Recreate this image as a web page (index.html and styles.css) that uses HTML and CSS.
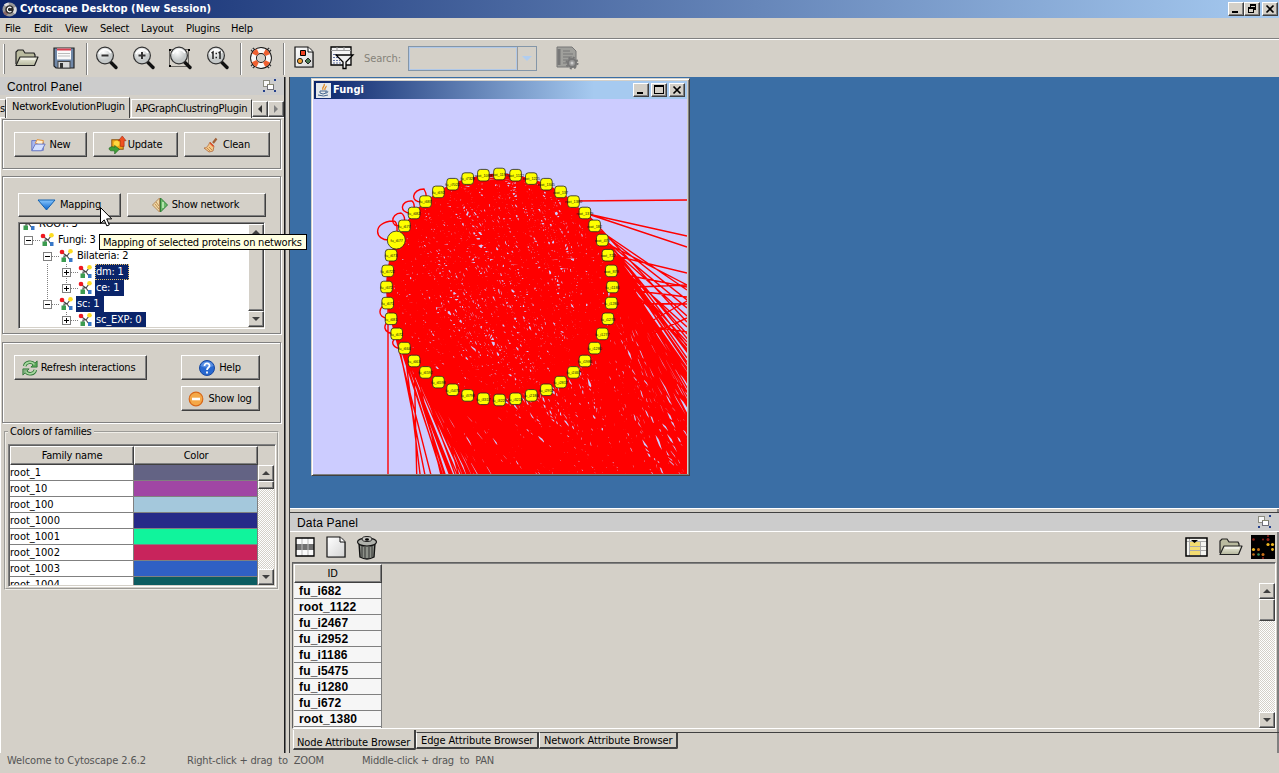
FILE: index.html
```html
<!DOCTYPE html>
<html lang="en">
<head>
<meta charset="utf-8">
<title>Cytoscape Desktop (New Session)</title>
<link rel="stylesheet" href="styles.css">
</head>
<body>
<svg width="0" height="0" class="defs">
  <defs>
    <linearGradient id="folderG" x2="0" y2="1"><stop stop-color="#f0f0e0"/><stop offset="1" stop-color="#b4b69c"/></linearGradient>
    <radialGradient id="lensG" cx=".4" cy=".3"><stop stop-color="#fff"/><stop offset="1" stop-color="#c4c8c8"/></radialGradient>
    <linearGradient id="pageG" x2="1" y2="1"><stop stop-color="#fff"/><stop offset="1" stop-color="#d4d4d4"/></linearGradient>
    <linearGradient id="blueG" x2="0" y2="1"><stop stop-color="#88c8ff"/><stop offset="1" stop-color="#0860c8"/></linearGradient>
    <symbol id="folder" viewBox="0 0 24 18"><path d="M1 15V3l2-2h5l2 3h9l1 2v3" fill="#babb9f" stroke="#222" stroke-width="1.2"/><path d="M1 16.500L5 8h18l-3.500 8.500z" fill="url(#folderG)" stroke="#222" stroke-width="1.200" stroke-linejoin="round"/><path d="M6 10h14" stroke="#fff"/></symbol>
    <symbol id="lens" viewBox="0 0 24 24"><path d="M15 15.500L21 21.500" stroke="#111" stroke-width="3.400" stroke-linecap="round"/><circle cx="10" cy="9.500" r="8.400" fill="url(#lensG)" stroke="#333" stroke-width="1.200"/><path d="M4 8c2-5 9-6 12-1" stroke="#fff" stroke-width="1.500" fill="none"/></symbol>
    <symbol id="page" viewBox="0 0 21 23"><path d="M2 2h15l3 4v16H2z" fill="#888" opacity=".6"/><path d="M1 1h13l5 5v15H1z" fill="url(#pageG)" stroke="#111" stroke-width="1.200"/><path d="M14 1v5h5" fill="#fff" stroke="#111"/></symbol>
    <symbol id="net" viewBox="0 0 14 14"><path d="M3 3.500l5 3.500 3-4M8 7H5v3M8 7l3 4" stroke="#444" stroke-width="1.100" fill="none"/><circle cx="3" cy="3" r="2.300" fill="#f01820"/><circle cx="11.500" cy="2.300" r="2.300" fill="#fddc20"/><rect x="2.500" y="8.500" width="4.500" height="4.500" fill="#3c9c50"/><rect x="10" y="9" width="3.500" height="4" fill="#3878c8"/></symbol>
    <symbol id="float" viewBox="0 0 14 14"><g fill="#24408c"><path d="M11 0h2v2h-2zM0 11h2v2H0zM11 11h2v2h-2z"/></g><rect x=".5" y="1.500" width="6" height="6" fill="#f8f8f8" stroke="#8c8c80"/><rect x="4.500" y="5.500" width="6" height="5" fill="#fff" stroke="#707078"/><path d="M4 5.500h7" stroke="#888870"/></symbol>
  </defs>
</svg>
<div class="app">
  <header class="titlebar">
    <svg class="logo" viewBox="0 0 16 16"><circle cx="8" cy="8" r="7.500" fill="#999"/><path d="M8 8L2 3A8 8 0 0 1 7 .5zM8 8l7-3a8 8 0 0 1-1 8z" fill="#ddd"/><path d="M8 8L1 11a8 8 0 0 0 4 4z" fill="#8a6868"/><circle cx="8" cy="8" r="4.500" fill="#282828"/><path d="M10 6.300a2.500 2.500 0 1 0 0 3.400" stroke="#fff" stroke-width="1.300" fill="none"/></svg>
    <span class="title-text">Cytoscape Desktop (New Session)</span>
    <div class="winbtns">
      <span class="wb bevel"><svg viewBox="0 0 12 10"><path d="M2 8h6" stroke="#000" stroke-width="2"/></svg></span>
      <span class="wb bevel"><svg viewBox="0 0 12 10"><path d="M4 0h6v6H8V4H4zM5 2v1h4V2z" fill="#000"/><path d="M2 3h6v6H2zM3 5v3h4V5z" fill="#000" fill-rule="evenodd"/></svg></span>
      <span class="wb bevel close"><svg viewBox="0 0 12 10"><path d="M2.500 1.500l7 7M9.500 1.500l-7 7" stroke="#000" stroke-width="1.700"/></svg></span>
    </div>
  </header>
  <nav class="menubar"><span class="m1">File</span><span class="m2">Edit</span><span class="m3">View</span><span class="m4">Select</span><span class="m5">Layout</span><span class="m6">Plugins</span><span class="m7">Help</span></nav>
  <div class="toolbar">
    <i class="grip"></i>
    <svg class="t-open"><use href="#folder"/></svg>
    <svg class="t-save" viewBox="0 0 22 22"><path d="M1 1h20v20H3l-2-2z" fill="#7088a8" stroke="#222" stroke-width="1.200"/><rect x="4" y="1.500" width="14" height="11" fill="#fafafa"/><path d="M4 2.500h14" stroke="#d84050" stroke-width="2"/><path d="M5 6.500h12M5 9h12" stroke="#bbb"/><rect x="5" y="14.500" width="12" height="6.500" fill="#d8d8d8" stroke="#444"/><rect x="7" y="16" width="3" height="5" fill="#333"/></svg>
    <i class="sep"></i>
    <svg class="t-z"><use href="#lens"/><path d="M6.500 9.500h7" stroke="#333" stroke-width="2"/></svg>
    <svg class="t-z"><use href="#lens"/><path d="M6.500 9.500h7M10 6v7" stroke="#333" stroke-width="2"/></svg>
    <svg class="t-z fit"><path d="M.5 3.500h19v17h-19z" fill="none" stroke="#000" stroke-dasharray="1 1"/><path d="M0 3h2v2H0zM19 3h2v2h-2zM0 19h2v2H0z"/><use href="#lens"/></svg>
    <svg class="t-z"><use href="#lens"/><path d="M5.500 7l1.500-1v7M12.500 7L14 6v7" stroke="#222" stroke-width="1.500" fill="none"/><path d="M9.500 7.500h1.500M9.500 11.500h1.500" stroke="#222" stroke-width="1.500"/></svg>
    <i class="sep s2"></i>
    <svg class="t-help" viewBox="0 0 24 24"><path d="M3 3l18 18M21 3L3 21" stroke="#333" stroke-width="4"/><path d="M3 3l18 18M21 3L3 21" stroke="#ddd" stroke-width="1.500"/><circle cx="12" cy="12" r="7.500" fill="#d4d0c8" stroke="#111" stroke-width="6.800"/><circle cx="12" cy="12" r="7.500" fill="none" stroke="#f8f8f8" stroke-width="5"/><circle cx="12" cy="12" r="7.500" fill="none" stroke="#f06030" stroke-width="5" stroke-dasharray="5 6.780" stroke-dashoffset="-3.400"/></svg>
    <i class="sep s3"></i>
    <svg class="t-viz"><use href="#page" width="21" height="23"/><path d="M6.500 4.500h5v5h-5z" fill="#f04020" stroke="#000"/><circle cx="6" cy="15" r="2.600" fill="#f0a030" stroke="#222"/><path d="M14 12l3 3-3 3-3-3z" fill="#487850" stroke="#222"/></svg>
    <svg class="t-filter" viewBox="0 0 24 23"><path d="M1 1h20v18H1z" fill="#f4f4f4" stroke="#000" stroke-width="1.300"/><path d="M1 4.500h20M7 1v4M14 1v4" stroke="#999"/><path d="M3 8.500h4M3 11.500h6M3 14.500h7M3 17h9" stroke="#6070a0" stroke-dasharray="2 1"/><path d="M6 9h17l-7 7v6.500h-3V16z" fill="#eee" stroke="#000" stroke-width="1.300"/></svg>
    <span class="search-label">Search:</span>
    <div class="combo"><span class="combo-field"></span><span class="combo-arrow"></span></div>
    <svg class="t-cfg" viewBox="0 0 23 24"><path d="M1 1h15l4 4v16H1z" fill="#a0a09c" stroke="#777"/><path d="M3 3v16" stroke="#777" stroke-width="3"/><path d="M7 5h7M7 8h10M7 11h9M7 14h6M7 17h5" stroke="#777" stroke-width="1.200"/><circle cx="16" cy="17" r="4" fill="#999" stroke="#777" stroke-width="2"/><circle cx="16" cy="17" r="5.500" fill="none" stroke="#777" stroke-width="2" stroke-dasharray="2 2.320"/><circle cx="16" cy="17" r="1.500" fill="#ccc"/></svg>
  </div>

  <main class="main">
    <aside class="left">
      <div class="panel-head"><span>Control Panel</span><svg class="floaticon"><use href="#float"/></svg></div>
      <div class="tabs">
        <span class="tab cut">s</span><span class="tab active">NetworkEvolutionPlugin</span><span class="tab second">APGraphClustringPlugin</span>
        <span class="tabarrow bevel"><i class="tri left-tri"></i></span><span class="tabarrow bevel"><i class="tri right-tri"></i></span>
      </div>
      <div class="left-body">
        <section class="group g1">
          <button class="btn b-new"><svg viewBox="0 0 18 16"><path d="M2 14V3h5l2 2h6v9z" fill="#a8b8f0" stroke="#6878c0"/><path d="M6 6l2-4 7 1-1 6z" fill="#fff0d0" stroke="#e08828"/><path d="M2 14.500L6 7h11l-4 7.500z" fill="#d4e0ff" stroke="#6070c0"/></svg>New</button>
          <button class="btn b-upd"><svg viewBox="0 0 20 20"><rect x="4" y="5" width="12" height="10" fill="#f0a818" stroke="#885010"/><circle cx="9" cy="9" r="3" fill="#ffd840"/><path d="M15 1l4 5h-2v6h-4V6h-2z" fill="#f05020" stroke="#a02008" stroke-width=".6"/><path d="M1 14c3-3 6-1 6-1v-2l5 4-5 5v-3c-3-1-5 1-6-3z" fill="#40a038" stroke="#185818" stroke-width=".6"/></svg>Update</button>
          <button class="btn b-clean"><svg viewBox="0 0 16 16"><path d="M10 6l3.500-4.500" stroke="#a06038" stroke-width="2.200"/><path d="M7 5l4 4-1 5-4 1-5-4c3 0 4-2 6-6z" fill="#f4c888" stroke="#b06838" stroke-width=".8"/><path d="M7 6l3.500 3.500" stroke="#e04828" stroke-width="1.300"/><path d="M4 11l3 3M6 10l3 3" stroke="#b87840" stroke-width=".8"/></svg>Clean</button>
        </section>
        <section class="group g2">
          <div class="row2">
            <button class="btn b-map"><svg viewBox="0 0 19 12"><path d="M1 1h17l-8.500 10z" fill="url(#blueG)" stroke="#1060b0"/></svg>Mapping</button>
            <button class="btn b-show"><svg viewBox="0 0 16 16"><path d="M7.500 1v14L.5 8z" fill="#f0d8a8" stroke="#b08858"/><path d="M8.500 1v14l7-7z" fill="#68b868" stroke="#308038"/><path d="M3 7l4 5M4 5l3 4" stroke="#c09050"/><path d="M11 5v6" stroke="#c8f0c0" stroke-width="1.500"/></svg>Show network</button>
          </div>
          <div class="treebox">
            <div class="tree">
              <div class="tr lv0"><svg class="net"><use href="#net"/></svg><span class="lb">ROOT: 3</span></div>
              <div class="tr lv1"><i class="ex"></i><i class="dots"></i><svg class="net"><use href="#net"/></svg><span class="lb">Fungi: 3</span></div>
              <div class="tr lv2"><i class="ex"></i><i class="dots"></i><svg class="net"><use href="#net"/></svg><span class="lb">Bilateria: 2</span></div>
              <div class="tr lv3"><i class="ex plus"></i><i class="dots"></i><svg class="net"><use href="#net"/></svg><span class="lb sel focus">dm: 1</span></div>
              <div class="tr lv3"><i class="ex plus"></i><i class="dots"></i><svg class="net"><use href="#net"/></svg><span class="lb sel">ce: 1</span></div>
              <div class="tr lv2"><i class="ex"></i><i class="dots"></i><svg class="net"><use href="#net"/></svg><span class="lb sel">sc: 1</span></div>
              <div class="tr lv3"><i class="ex plus"></i><i class="dots"></i><svg class="net"><use href="#net"/></svg><span class="lb sel exp">sc_EXP: 0</span></div>
              <i class="vline v1"></i><i class="vline v2"></i><i class="vline v3"></i>
            </div>
            <div class="sb"><span class="sbb bevel"><i class="tri up"></i></span><span class="thumb bevel grow"></span><span class="sbb bevel"><i class="tri down"></i></span></div>
          </div>
        </section>
        <section class="group g3">
          <button class="btn b-ref"><svg viewBox="0 0 18 18"><path d="M3 7c1-5 8-6 11-2" stroke="#307838" stroke-width="4" fill="none"/><path d="M17 1v7h-7z" fill="#58a858" stroke="#307838"/><path d="M15 11c-1 5-8 6-11 2" stroke="#307838" stroke-width="4" fill="none"/><path d="M1 17v-7h7z" fill="#80b080" stroke="#307838"/><path d="M3 7c1-5 8-6 11-2M15 11c-1 5-8 6-11 2" stroke="#a8d8a0" stroke-width="2" fill="none"/></svg>Refresh interactions</button>
          <div class="stack">
            <button class="btn b-help"><svg viewBox="0 0 16 16"><circle cx="8" cy="8" r="7.500" fill="#2868d0" stroke="#1848a0"/><path d="M1.500 6a7 7 0 0 1 13 0q-7 3-13 0" fill="#78a8f0" opacity=".6"/><path d="M5.500 6c0-4 5.500-3 5 0 0 1.500-2.500 1.500-2.500 4M8 11.500v2" stroke="#fff" stroke-width="1.800" fill="none"/></svg>Help</button>
            <button class="btn b-log"><svg viewBox="0 0 16 16"><circle cx="8" cy="8" r="6.800" fill="#f4a848" stroke="#d86818" stroke-width="1.200"/><path d="M4 8h8" stroke="#fff" stroke-width="2.600"/></svg>Show log</button>
          </div>
        </section>
        <fieldset class="families"><legend>Colors of families</legend>
          <div class="ftable">
            <div class="fhead"><span class="bevel">Family name</span><span class="bevel">Color</span></div>
            <div class="fbody">
              <div class="frows">
                <div><span>root_1</span><b class="c1"></b></div><div><span>root_10</span><b class="c2"></b></div><div><span>root_100</span><b class="c3"></b></div><div><span>root_1000</span><b class="c4"></b></div><div><span>root_1001</span><b class="c5"></b></div><div><span>root_1002</span><b class="c6"></b></div><div><span>root_1003</span><b class="c7"></b></div><div><span>root_1004</span><b class="c8"></b></div>
              </div>
              <div class="sb"><span class="sbb bevel"><i class="tri up"></i></span><span class="thumb bevel short"></span><span class="track"></span><span class="sbb bevel"><i class="tri down"></i></span></div>
            </div>
          </div>
        </fieldset>
      </div>
    </aside>
    <div class="right">
      <div class="desktop">
        <section class="frame">
          <header class="frame-title">
            <svg class="java" viewBox="0 0 15 15"><rect width="15" height="15" fill="#e4e8ec"/><path d="M8 1c2 2-3 3-1 6M10 3c1 1-2 2-1 4" stroke="#e08820" stroke-width="1.300" fill="none"/><path d="M4 8h6v2q-3 2-6 0zM10 8c3 0 2 2 0 2M2 12q6 2 10 0" stroke="#486890" fill="none"/></svg>
            <span class="frame-name">Fungi</span>
            <div class="winbtns">
              <span class="wb bevel"><svg viewBox="0 0 12 10"><path d="M2 8h6" stroke="#000" stroke-width="2"/></svg></span>
              <span class="wb bevel"><svg viewBox="0 0 12 10"><path d="M1 0h10v9H1zM2 2v6h8V2z" fill-rule="evenodd"/></svg></span>
              <span class="wb bevel close"><svg viewBox="0 0 12 10"><path d="M2.500 1.500l7 7M9.500 1.500l-7 7" stroke="#000" stroke-width="1.700"/></svg></span>
            </div>
          </header>
          <svg class="graph" id="graph" viewBox="313 99 374 375"></svg>
        </section>
      </div>
      <section class="data">
        <div class="panel-head"><span>Data Panel</span><svg class="floaticon"><use href="#float"/></svg></div>
        <div class="databar">
          <svg class="d1" viewBox="0 0 21 21"><path d="M1 1h18v18H1z" fill="#fafafa"/><path d="M1 10h18" stroke="#707070" stroke-width="6"/><path d="M7 1v18M13 1v18" stroke="#bbb"/><path d="M1 1h18v18H1z" fill="none" stroke="#000" stroke-width="1.300"/></svg>
          <svg class="d2"><use href="#page"/></svg>
          <svg class="d3" viewBox="0 0 22 25"><path d="M3 8l1 14q7 4 14 0l1-14z" fill="#8c9088" stroke="#111" stroke-width="1.400"/><path d="M6 11v11M9 12v12M13 12v12M16 11v11" stroke="#333"/><ellipse cx="11" cy="7" rx="9.500" ry="4" fill="#b0b2ac" stroke="#111" stroke-width="1.200"/><ellipse cx="11" cy="4" rx="5" ry="2.500" fill="#c8c8c4" stroke="#222"/><ellipse cx="11" cy="4.500" rx="2" ry="1.300"/></svg>
          <svg class="d4" viewBox="0 0 23 20"><path d="M1 1h21v18H1z" fill="#f4f4f0"/><path d="M5 5h10v13H5z" fill="#f4dc70"/><path d="M1.500 4.500h20M5 9.500h16M5 13.500h16M4.500 1v18M15.500 4v15" stroke="#aaa"/><path d="M1 1h21v18H1z" fill="none" stroke="#000" stroke-width="1.500"/><path d="M6 3h7l-3.500 3z"/></svg>
          <svg class="d5"><use href="#folder"/></svg>
          <svg class="d6" viewBox="0 0 24 24"><path d="M0 0h24v24H0z"/><g fill="#f0b820"><circle cx="17" cy="9.500" r="1.600"/><circle cx="21.500" cy="9.500" r="1.600"/><circle cx="2.500" cy="14.500" r="1.600"/><circle cx="21.500" cy="14.500" r="1.400"/></g><g fill="#c87018"><circle cx="7.500" cy="14.500" r="1.500"/><circle cx="12" cy="19.500" r="1.500"/><circle cx="2.500" cy="19.500" r="1.300"/></g><g fill="#902018"><circle cx="2.500" cy="4.500" r="1.300"/><circle cx="12" cy="4.500" r="1"/><circle cx="17" cy="4.500" r="1.500"/><circle cx="17" cy="1" r="1"/><circle cx="12" cy="23" r="1"/></g><circle cx="7.500" cy="19.500" r="1.300" fill="#38905c"/></svg>
        </div>
        <div class="idtable">
          <div class="idcol"><div class="idhead bevel">ID</div><div class="idr">fu_i682</div><div class="idr">root_1122</div><div class="idr">fu_i2467</div><div class="idr">fu_i2952</div><div class="idr">fu_i1186</div><div class="idr">fu_i5475</div><div class="idr">fu_i1280</div><div class="idr">fu_i672</div><div class="idr">root_1380</div><div class="idr"></div></div>
          <div class="sb data-sb"><span class="sbb bevel"><i class="tri up"></i></span><span class="thumb bevel mid"></span><span class="track"></span><span class="sbb bevel"><i class="tri down"></i></span></div>
        </div>
        <div class="btabs"><span class="bt on">Node Attribute Browser</span><span class="bt e">Edge Attribute Browser</span><span class="bt n">Network Attribute Browser</span></div>
      </section>
    </div>
  </main>
  <footer class="status"><span class="s-a">Welcome to Cytoscape 2.6.2</span><span class="s-b">Right-click + drag&nbsp; to&nbsp; ZOOM</span><span class="s-c">Middle-click + drag&nbsp; to&nbsp; PAN</span></footer>
  <div class="tooltip">Mapping of selected proteins on networks</div>
  <svg class="cursor" viewBox="0 0 12 20"><path d="M.5.5v16l3.700-3.600 2.600 6 2.500-1-2.600-6h5z" fill="#fff" stroke="#000"/></svg>
</div>
<script src="graph.js"></script>
</body>
</html>
```
FILE: styles.css
```css
* { box-sizing: border-box; }
body { margin: 0; background: #d4d0c8; overflow: hidden; }
.defs { position: absolute; }
.app { position: relative; width: 1279px; height: 773px; display: flex; flex-direction: column; background: #d4d0c8; color: #000; font: 11px/14px "DejaVu Sans Condensed", "DejaVu Sans", sans-serif; font-stretch: condensed; letter-spacing: -.22px; white-space: nowrap; overflow: hidden; }
svg { display: block; flex: none; overflow: visible; }
.bevel { border: 1px solid; border-color: #fff #404040 #404040 #fff; box-shadow: inset -1px -1px #808080; background: #d4d0c8; }

.titlebar { height: 18px; display: flex; align-items: center; padding: 0 1px 0 2px; background: linear-gradient(90deg, #0a246a, #a6caf0); color: #fff; }
.logo { width: 15px; height: 15px; margin-right: 3px; }
.title-text, .frame-name { font-weight: bold; letter-spacing: .04px; }
.winbtns { display: flex; margin-left: auto; }
.wb { width: 16px; height: 14px; display: flex; align-items: center; justify-content: center; }
.wb svg { width: 12px; height: 10px; }
.close { margin-left: 2px; }
.frame-title .winbtns { gap: 2px; }
.frame-title .close { margin-left: 0; }

.menubar { height: 22px; display: flex; align-items: center; padding: 0 0 0 5px; border-bottom: 1px solid #fff; box-shadow: inset 0 -1px #808080; }
.m1 { width: 29px; } .m2 { width: 31px; } .m3 { width: 35px; } .m4 { width: 41px; } .m5 { width: 45px; } .m6 { width: 45px; }

.toolbar { height: 37px; display: flex; align-items: center; padding-left: 3px; }
.toolbar > svg { margin-bottom: 2px; }
.grip { width: 2px; height: 30px; background: #808080; border-left: 1px solid #fff; margin-right: 10px; }
.t-open { width: 24px; height: 18px; margin-right: 14px; }
.t-save { width: 22px; height: 22px; margin-right: 11px; }
.sep { width: 2px; height: 32px; background: #fff; border-left: 1px solid #808080; margin-right: 7px; }
.t-z { width: 24px; height: 24px; margin-right: 13px; }
.s2 { margin: 0 7px 0 -3px; }
.t-help { width: 24px; height: 24px; margin-right: 10px; }
.s3 { margin-right: 9px; }
.t-viz { width: 21px; height: 23px; margin-right: 15px; }
.t-filter { width: 24px; height: 23px; margin-right: 10px; }
.search-label { color: #858279; width: 44px; letter-spacing: -.05px; }
.combo { display: flex; height: 25px; width: 129px; border: 1px solid #8496a8; }
.combo-field { flex: 1; border: 1px solid #b0c8e8; }
.combo-arrow { width: 19px; border-left: 1px solid #999; display: flex; align-items: center; justify-content: center; }
.combo-arrow::before { content: ""; border: 5px solid transparent; border-top-color: #b0cdf0; border-bottom: 0; }
.t-cfg { width: 23px; height: 24px; margin-left: 19px; }

.main { height: 676px; display: flex; }
.left { width: 286px; border-right: 2px solid #707070; border-right-style: groove; display: flex; flex-direction: column; }
.panel-head { height: 18px; flex: none; background: #ccc; display: flex; align-items: center; justify-content: space-between; padding: 1px 7px 0 7px; font: 12px/16px "Liberation Sans", sans-serif; letter-spacing: .18px; }
.floaticon { width: 14px; height: 14px; margin-top: -2px; }
.tabs { height: 23px; display: flex; align-items: flex-end; box-shadow: inset 0 -1px #fff; }
.tab { height: 19px; border: 1px solid #fff; border-right-color: #404040; border-bottom: 0; padding-top: 2px; }
.tab.cut { width: 6px; border-left: 0; overflow: hidden; }
.tab.active { height: 21px; width: 124px; padding-left: 5px; padding-top: 2px; background: #d4d0c8; }
.tab.second { width: 122px; padding-left: 4px; margin-left: 1px; letter-spacing: -.28px; }
.tabarrow { width: 16px; height: 16px; display: flex; align-items: center; justify-content: center; margin-bottom: 1px; }
.tri { border: 4px solid transparent; width: 0; height: 0; }
.left-tri { border-right-color: #333; border-left: 0; }
.right-tri { border-left-color: #808080; border-right: 0; }
.up { border-bottom-color: #404040; border-top: 0; }
.down { border-top-color: #404040; border-bottom: 0; }
.left-body { flex: 1; padding: 1px 2px 0 1px; border-left: 1px solid #fff; display: flex; flex-direction: column; }
.group { border: 1px solid #808080; box-shadow: 1px 1px #fff, inset 1px 1px #fff; width: 279px; flex: none; }
.g1 { height: 50px; display: flex; gap: 6px; padding: 12px 0 0 11px; }
.g2 { height: 158px; margin-top: 7px; padding: 16px 0 0 15px; }
.g3 { height: 81px; margin-top: 8px; padding: 12px 0 0 11px; display: flex; gap: 34px; }
.btn { font: inherit; letter-spacing: inherit; color: #000; height: 25px; padding: 0 1px 0 0; display: flex; align-items: center; justify-content: center; gap: 4px; border: 1px solid; border-color: #fff #404040 #404040 #fff; box-shadow: inset -1px -1px #808080; background: #d4d0c8; }
.btn svg { width: 16px; height: 16px; }
.b-new { width: 73px; } .b-upd { width: 85px; gap: 1px; } .b-upd svg { width: 19px; height: 19px; } .b-clean { width: 86px; }
.row2 { display: flex; gap: 6px; }
.row2 .btn { height: 24px; }
.b-map { width: 103px; } .b-show { width: 139px; }
.btn.b-show { padding-right: 2px; }
.btn.b-ref { padding-right: 4px; gap: 3px; }
.btn.b-map svg { width: 19px; height: 12px; }
.b-ref { width: 133px; }
.b-help, .b-log { width: 79px; }
.stack { display: flex; flex-direction: column; gap: 6px; }

.treebox { width: 247px; height: 107px; margin-top: 5px; border: 1px solid; border-color: #808080 #fff #fff #808080; box-shadow: inset 1px 1px #404040; padding: 1px 0 1px 1px; display: flex; overflow: hidden; }
.tree { position: relative; flex: 1; background: #fff; overflow: hidden; }
.tr { height: 16px; display: flex; align-items: center; }
.tr.lv0 { margin-top: -8px; padding-left: 1px; }
.lv1 { padding-left: 4px; } .lv2 { padding-left: 23px; } .lv3 { padding-left: 42px; }
.ex { width: 9px; height: 9px; border: 1px solid #808080; background: linear-gradient(#000, #000) center / 5px 1px no-repeat #fff; position: relative; z-index: 1; }
.plus { background: linear-gradient(#000, #000) center / 5px 1px no-repeat, linear-gradient(#000, #000) center / 1px 5px no-repeat, #fff; }
.dots { width: 7px; height: 1px; background: repeating-linear-gradient(90deg, #808080 0 1px, #fff 1px 2px); }
.net { width: 14px; height: 14px; margin-right: 2px; }
.lb { padding: 0 2px 0 2px; height: 16px; line-height: 15px; }
.sel { background: #0a246a; color: #fff; padding-left: 1px; margin-left: 1px; padding-right: 5px; }
.focus { outline: 1px dotted #e8c068; outline-offset: -1px; }
.vline { position: absolute; width: 1px; background: repeating-linear-gradient(#808080 0 1px, #fff 1px 2px); }
.v1 { left: 27px; top: 40px; height: 40px; } .v2 { left: 46px; top: 40px; height: 24px; } .v3 { left: 46px; top: 88px; height: 10px; }
.sb { width: 16px; display: flex; flex-direction: column; flex: none; }
.sbb { height: 16px; flex: none; display: flex; align-items: center; justify-content: center; }
.grow { flex: 1; }
.track { flex: 1; background: repeating-conic-gradient(#fff 0 25%, #d4d0c8 0 50%) 0 0 / 2px 2px; }
.short { height: 8px; } .mid { height: 22px; }

.families { margin: 2px 0 0 2px; width: 275px; height: 165px; min-width: 0; padding: 0 0 0 2px; border: 2px groove #f0eee8; flex: none; }
.families legend { padding: 0 2px; height: 14px; }
.ftable { width: 268px; height: 143px; margin-top: 5px; border: 1px solid; border-color: #808080 #fff #fff #808080; box-shadow: inset 1px 1px #606060; padding: 1px; overflow: hidden; }
.fhead { display: flex; }
.fhead span { width: 124px; height: 19px; line-height: 17px; text-align: center; }
.fbody { display: flex; height: 120px; overflow: hidden; }
.frows { width: 248px; }
.frows div { display: flex; height: 16px; }
.frows span, .frows b { width: 124px; border: solid #808080; border-width: 0 1px 1px 0; }
.frows span { background: #fff; line-height: 15px; letter-spacing: 0; }
.c1 { background: #636384; } .c2 { background: #a046a4; } .c3 { background: #a4c8dc; } .c4 { background: #262a88; } .c5 { background: #10f49c; } .c6 { background: #c8245c; } .c7 { background: #3060c4; } .c8 { background: #0c5c60; }

.right { width: 990px; margin-left: 3px; border-left: 1px solid #404040; display: flex; flex-direction: column; }
.desktop { height: 431px; background: #3a6ea5; padding: 1px 0 0 21px; }
.frame { width: 379px; height: 398px; border: 1px solid; border-color: #d4d0c8 #404040 #404040 #d4d0c8; box-shadow: inset 1px 1px #fff, inset -1px -1px #808080; background: #d4d0c8; padding: 2px; }
.frame-title { height: 18px; margin: 0; display: flex; align-items: center; padding: 0 2px 0 2px; color: #fff; background: linear-gradient(90deg, #0a246a, #a6caf0 75%); }
.java { width: 15px; height: 15px; margin-right: 2px; }
.graph { width: 374px; height: 375px; margin-left: -1px; background: #ccf; overflow: hidden; }
.edges { fill: none; stroke: #f00; stroke-width: 1.400; }
.nodes rect, .nodes circle { fill: #ff0; stroke: #222; stroke-width: .8; }
.nodes text { font: 3.800px "Liberation Sans", sans-serif; letter-spacing: 0; text-anchor: middle; fill: #111; }

.data { height: 245px; border-top: 1px solid #fff; padding-top: 3px; display: flex; flex-direction: column; box-shadow: inset -2px 0 #808080; }
.data .panel-head { border-top: 1px solid #404040; height: 20px; border-bottom: 1px solid #fff; }
.databar { height: 30px; display: flex; align-items: center; padding: 0 4px 0 5px; flex: none; }
.d1 { width: 21px; height: 21px; margin-right: 10px; } .d2 { width: 21px; height: 23px; margin-right: 9px; } .d3 { width: 22px; height: 25px; }
.d4 { width: 23px; height: 20px; margin-left: auto; margin-right: 11px; } .d5 { width: 24px; height: 18px; margin-right: 8px; } .d6 { width: 24px; height: 24px; }
.idtable { height: 167px; flex: none; margin: 0 3px 0 2px; border: 1px solid; border-color: #606060 #fff #fff #606060; box-shadow: inset 0 1px #808080; padding: 1px 0 0 1px; display: flex; justify-content: space-between; overflow: hidden; }
.idcol { width: 88px; }
.idhead { height: 19px; text-align: center; padding-right: 11px; line-height: 17px; font-family: "DejaVu Sans", sans-serif; }
.idr { height: 16px; background: #f6f6f6; border: solid #808080; border-width: 0 1px 1px 0; padding-left: 5px; font: bold 12px/17px "Liberation Sans", sans-serif; letter-spacing: .15px; }
.data-sb { margin-top: 19px; }
.btabs { height: 23px; display: flex; align-items: flex-start; padding: 0 0 0 3px; letter-spacing: -.12px; background: linear-gradient(#404040, #404040) 124px 3px / 100% 1px no-repeat; }
.bt { height: 17px; margin-top: 3px; border: solid #404040; border-width: 1px 2px 2px 1px; border-left-color: #fff; border-radius: 0 0 2px 0; padding: 0 0 0 4px; line-height: 15px; }
.bt.on { width: 123px; height: 20px; margin-top: 1px; border-top: 0; padding: 6px 0 0 3px; line-height: 13px; }
.bt.e { width: 123px; } .bt.n { width: 139px; }

.status { height: 20px; padding: 0 0 0 7px; display: flex; color: #555; line-height: 15px; letter-spacing: -.1px; }
.s-a { width: 180px; } .s-b { width: 175px; letter-spacing: -.2px; } .s-c { letter-spacing: -.2px; }
.tooltip { position: absolute; left: 99px; top: 234px; width: 208px; height: 16px; padding-left: 3px; border: 1px solid #000; background: #ffffe1; line-height: 15px; }
.cursor { position: absolute; left: 100px; top: 207px; width: 12px; height: 20px; }
```
FILE: graph.js
```js
// Draws the circular network layout: edges, self loops and labelled nodes.
(function () {
  var seed = 17;
  function rnd() { seed = (seed * 16807) % 2147483647; return seed / 2147483647; }
  var cx = 499.5, cy = 287, r = 113, count = 44, nodes = [], d = '', i, j;
  var labels = ['root_1192','root_1122','root_1225','root_1345','root_137','root_1380','root_1379','root_182','root_478','root_722','root_878','fu_i1186','fu_i1280','fu_i1273','fu_i1277','fu_i1280','fu_i1986','fu_i2467','fu_i2817','fu_i2952','fu_i2180','fu_i3217','fu_i3220','fu_i3317','fu_i3798','fu_i5475','fu_i6598','fu_i6592','fu_i663','fu_i664','fu_i672','fu_i681','fu_i671','fu_i672','fu_i6722','fu_i673','fu_i677','fu_i677','fu_i682','fu_i687','fu_i692','fu_i7022','fu_i7328','root_1088'];
  for (i = 0; i < count; i++) {
    var a = i * 2 * Math.PI / count;
    nodes.push([cx + r * Math.sin(a), cy - r * Math.cos(a)]);
  }
  function line(x1, y1, x2, y2) { d += 'M' + x1.toFixed(1) + ' ' + y1.toFixed(1) + 'L' + x2.toFixed(1) + ' ' + y2.toFixed(1); }
  // links between members of the ring
  for (i = 0; i < count; i++) for (j = i + 1; j < count; j++) {
    var upper = i < 12 && j < 14, left = i > 28;
    if (rnd() < (upper ? 0.12 : left ? 0.8 : 0.42)) line(nodes[i][0], nodes[i][1], nodes[j][0], nodes[j][1]);
  }
  // links to the rings beyond the lower right corner
  for (i = 0; i < 620; i++) {
    var n = nodes[Math.floor(rnd() * count)], t = rnd() * 2 * Math.PI, q = 60 + rnd() * 190;
    line(n[0], n[1], 775 + q * Math.cos(t), 800 + q * Math.sin(t));
  }
  for (i = 0; i < 10; i++) line(nodes[28 + i % 4][0], nodes[28 + i % 4][1], 418 + i * 9, 530);
  line(388, 300, 388, 480);
  [[573,201,687,200],[588,214,687,236],[588,214,687,247],[608,254,687,273],[596,228,687,290],[596,228,687,300],[600,236,687,308],[602,240,687,316],[604,242,687,285],[606,254,687,327],[602,240,687,334],[606,254,687,342],[608,256,687,350],[611,272,687,287],[611,288,687,285],[612,288,687,297],[610,303,687,304],[640,325,687,332],[650,322,687,301],[650,335,687,318],[611,270,687,345],[585,212,687,322],[594,226,687,352],[594,226,687,358],[602,240,687,362],[585,212,687,346],[608,255,687,368],[602,240,687,376]].forEach(function (e) { line(e[0], e[1], e[2], e[3]); });
  // self loops
  d += 'M390 240C374 241 372 222 393 221C398 221 397 230 397 233M401 225C390 229 390 213 401 213Q406 216 404 223M411 213C398 213 401 200 412 201Q415 203 414 210M423 202C409 203 412 189 424 189Q427 194 426 199M387 304C379 305 376 318 388 318M390 321C383 324 382 333 395 334M396 338C389 342 394 350 404 348';
  var out = '<path class="edges" d="' + d + '"/><g class="nodes">';
  nodes.forEach(function (p, k) {
    out += k === 36 ? '<circle cx="' + (p[0] - 0.4).toFixed(1) + '" cy="' + p[1].toFixed(1) + '" r="9"/>' : '<rect x="' + (p[0] - 5.8).toFixed(1) + '" y="' + (p[1] - 5.8).toFixed(1) + '" width="11.6" height="11.6" rx="3"/>';
    out += '<text x="' + p[0].toFixed(1) + '" y="' + (p[1] + 1.8).toFixed(1) + '">' + labels[k] + '</text>';
  });
  document.getElementById('graph').innerHTML = out + '</g>';
})();
```
